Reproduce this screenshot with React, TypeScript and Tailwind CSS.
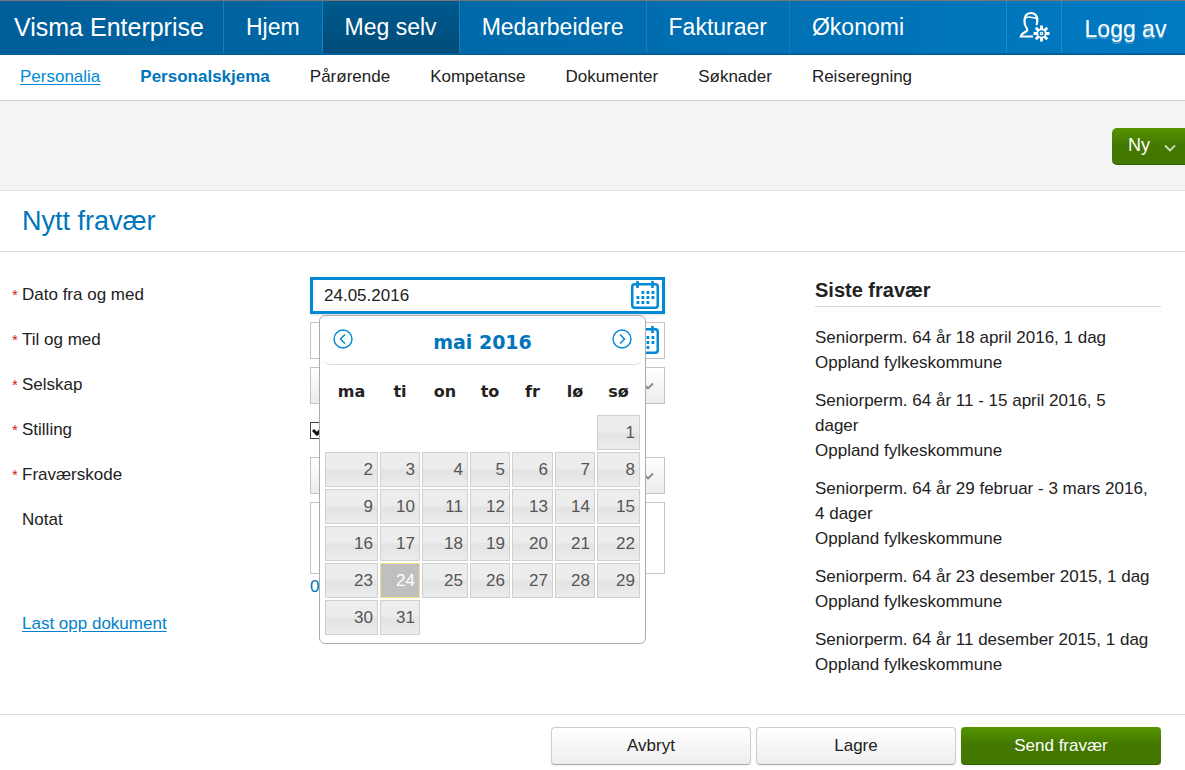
import type { ReactNode } from "react";

const navItem =
  "flex items-center border-r border-[#1c7db9] px-[22px] text-[23px] leading-8 text-white pb-px";

const subLinks = ["Pårørende", "Kompetanse", "Dokumenter", "Søknader", "Reiseregning"];

const weekdays = [
  { name: "ma", width: "w-[55px]" },
  { name: "ti", width: "w-[42px]" },
  { name: "on", width: "w-[48px]" },
  { name: "to", width: "w-[42px]" },
  { name: "fr", width: "w-[43px]" },
  { name: "lø", width: "w-[42px]" },
  { name: "sø", width: "w-[45px]" },
];

const firstWeekday = 6;
const weeks = Array.from({ length: 6 }, (_, w) =>
  Array.from({ length: 7 }, (_, d) => {
    const day = w * 7 + d - firstWeekday + 1;
    return day >= 1 && day <= 31 ? day : null;
  }),
);

const absences = [
  "Seniorperm. 64 år 18 april 2016, 1 dag",
  "Seniorperm. 64 år 11 - 15 april 2016, 5 dager",
  "Seniorperm. 64 år 29 februar - 3 mars 2016, 4 dager",
  "Seniorperm. 64 år 23 desember 2015, 1 dag",
  "Seniorperm. 64 år 11 desember 2015, 1 dag",
];

function CalendarIcon() {
  return (
    <svg width="28" height="28" viewBox="0 0 28 28" fill="none" stroke="#0089d7" aria-hidden="true">
      <rect x="1.25" y="3.25" width="25.5" height="23.5" rx="2.5" strokeWidth="2.5" />
      <path d="M6.5 0v7M21.5 0v7" strokeWidth="2.6" />
      <path d="M10.5 11.500h13M5.5 16.500h18M5.5 21.500h13" strokeWidth="2.8" strokeDasharray="2.8 2.2" />
    </svg>
  );
}

function UserGearIcon() {
  return (
    <svg width="32" height="32" viewBox="0 0 32 32" fill="none" stroke="white" aria-hidden="true">
      <path
        d="M15 25.500H2.800c.8-2.600 2.900-3.900 5.200-5 1.500-.8 1.500-2 .7-3.300C7.300 15.300 6.500 13.300 6.500 10.800 6.500 5 8.500 2 12.700 2c4.800 0 7 3.200 6.500 8.500-.1 1.500-.4 2.600-.9 3.500"
        strokeWidth="2.200"
      />
      <path d="M7 7.500c1.500-1.300 3.500-1.700 5.500-1.300 2.500.5 4.500.3 6 1.500" strokeWidth="1.600" />
      <circle cx="23.500" cy="22.500" r="4.200" strokeWidth="1.800" />
      <circle cx="23.500" cy="22.500" r="1.200" strokeWidth="1.200" />
      <path
        d="M23.500 14.500v4M23.500 26.500v4M15.500 22.500h4M27.500 22.500h4M17.800 16.800l2.900 2.900M26.300 25.300l2.900 2.900M29.200 16.800l-2.900 2.900M20.700 25.300l-2.900 2.900"
        strokeWidth="2.900"
      />
    </svg>
  );
}

function Chevron({ className }: { className: string }) {
  return (
    <svg width="12" height="12" viewBox="0 0 12 12" fill="none" stroke="currentColor" className={className} aria-hidden="true">
      <path d="M1 3.500l5 5 5-5" strokeWidth="1.800" />
    </svg>
  );
}

function ArrowCircle({ flip }: { flip?: boolean }) {
  return (
    <svg width="20" height="20" viewBox="0 0 20 20" fill="none" stroke="#0089d7" aria-hidden="true" className={flip ? "rotate-180" : ""}>
      <circle cx="10" cy="10" r="9" strokeWidth="1.400" />
      <path d="M12 5.500L7.500 10l4.500 4.500" strokeWidth="1.500" />
    </svg>
  );
}

function Row({ id, label, required, children }: { id: string; label: string; required?: boolean; children: ReactNode }) {
  return (
    <div className="flex items-start">
      <label htmlFor={id} className="flex w-[310px] shrink-0 pl-3 text-[17px] leading-9 text-[#222]">
        <span className="w-[10px] text-[15px] text-[#d02020]">{required ? "*" : ""}</span>
        {label}
      </label>
      <div className="relative min-w-0 max-w-[355px] flex-1">{children}</div>
    </div>
  );
}

function SelectBox({ id }: { id: string }) {
  return (
    <>
      <select
        id={id}
        className="block h-[37px] w-full appearance-none border border-[#c4c4c4] bg-linear-to-b from-white to-[#ececec] px-3 text-[17px]"
      >
        <option></option>
      </select>
      <Chevron className="pointer-events-none absolute top-[13px] right-[11px] text-[#888]" />
    </>
  );
}

function DatePicker() {
  return (
    <div className="absolute top-[38px] left-[9px] z-10 w-[327px] rounded-md border border-[#aaa] bg-white px-1 pb-[7px]">
      <div className="flex h-[49px] items-center justify-between rounded-md border-b border-[#ddd] px-[9px] pb-[3px]">
        <button type="button" aria-label="Forrige måned">
          <ArrowCircle />
        </button>
        <span className="pt-[6px] font-['DejaVu_Sans',sans-serif] text-[19px] leading-7 font-bold text-[#0075bc]">mai 2016</span>
        <button type="button" aria-label="Neste måned">
          <ArrowCircle flip />
        </button>
      </div>
      <table className="table-fixed border-collapse">
        <thead>
          <tr className="h-[49px]">
            {weekdays.map((d) => (
              <th key={d.name} className={`${d.width} p-0 pt-1 text-center font-['DejaVu_Sans',sans-serif] text-[16px] leading-6 font-bold text-[#222]`}>
                {d.name}
              </th>
            ))}
          </tr>
        </thead>
        <tbody>
          {weeks.map((week, w) => (
            <tr key={w} className="h-[37px]">
              {week.map((day, d) => (
                <td key={d} className="p-px">
                  {day !== null && (
                    <button
                      type="button"
                      className={
                        day === 24
                          ? "block h-[35px] w-full border border-[#f0e08c] bg-[#bfbfbf] pr-1 text-right text-[17px] leading-8 text-white"
                          : "block h-[35px] w-full border border-[#d0d0d0] bg-linear-to-b from-[#ededed] from-45% via-[#e3e3e3] via-55% to-[#ededed] pr-1 text-right text-[17px] leading-8 text-[#555]"
                      }
                    >
                      {day}
                    </button>
                  )}
                </td>
              ))}
            </tr>
          ))}
        </tbody>
      </table>
    </div>
  );
}

const plainButton =
  "h-[38px] w-[200px] rounded border border-[#ccc] border-b-[#aaa] bg-linear-to-b from-white to-[#eee] text-[17px] leading-6 text-[#222] shadow-xs";

export default function App() {
  return (
    <div className="min-h-screen bg-white font-['Liberation_Sans',Arial,sans-serif] text-[#222]">
      <header className="flex h-[55px] border-t border-b-2 border-t-[#777] border-b-[#00609b] bg-linear-to-r from-[#005e98] to-[#007ac2]">
        <a href="#" className="flex items-center border-r border-[#1c7db9] pr-[19px] pl-[14px] text-[25px] leading-8 text-white">
          Visma Enterprise
        </a>
        <nav className="flex">
          <a href="#" className={navItem}>Hjem</a>
          <a href="#" className={`${navItem} bg-linear-to-b from-[#005b8f] to-[#004b79]`}>Meg selv</a>
          <a href="#" className={navItem}>Medarbeidere</a>
          <a href="#" className={navItem}>Fakturaer</a>
          <a href="#" className="flex items-center px-[22px] pb-px text-[23px] leading-8 text-white">Økonomi</a>
        </nav>
        <a href="#" aria-label="Brukerinnstillinger" className="ml-auto flex w-14 items-center justify-center border-x border-[#2189c8]">
          <UserGearIcon />
        </a>
        <a href="#" className="flex w-[123px] items-center justify-center pt-[3px] pl-1 text-[23px] leading-8 text-white text-shadow-[0_2px_0_rgb(255_255_255/0.3)]">
          Logg av
        </a>
      </header>

      <nav className="flex h-[46px] items-center gap-10 border-b border-[#d6d6d6] px-5 pb-px text-[17px] leading-6">
        <a href="#" className="text-[#0089d7] underline underline-offset-2">Personalia</a>
        <a href="#" className="font-bold text-[#0075bc]">Personalskjema</a>
        {subLinks.map((l) => (
          <a key={l} href="#">{l}</a>
        ))}
      </nav>

      <div className="flex h-[90px] items-start justify-end border-b border-[#e2e2e2] bg-[#f4f4f4] pt-[27px]">
        <button type="button" className="flex h-[37px] w-[73px] items-center justify-between rounded-l-[5px] border-b border-[#2f6000] bg-linear-to-b from-[#569400] to-[#437700] to-50% pr-[9px] pb-[2px] pl-4 text-[18px] leading-6 text-white">
          Ny
          <Chevron className="mt-[6px] text-[#cfe0ba]" />
        </button>
      </div>

      <h1 className="border-b border-[#dcdcdc] pt-[10px] pb-[10px] pl-[22px] text-[27px] leading-10 text-[#0075bc]">Nytt fravær</h1>

      <main className="flex items-start justify-between border-b border-[#dcdcdc] pt-[25px] pr-6 pb-[37px]">
        <form className="flex min-w-0 flex-1 flex-col gap-2">
          <Row id="from" label="Dato fra og med" required>
            <input
              id="from"
              type="text"
              defaultValue="24.05.2016"
              className="block h-[37px] w-full border-3 border-[#0089d7] bg-white pr-10 pl-[11px] text-[17px] leading-6 shadow-sm outline-none"
            />
            <button type="button" aria-label="Velg dato fra og med" className="absolute top-1 right-[6px]">
              <CalendarIcon />
            </button>
            <DatePicker />
          </Row>
          <Row id="to" label="Til og med" required>
            <input id="to" type="text" className="block h-[37px] w-full border border-[#c4c4c4] bg-white pr-10 pl-3 text-[17px] leading-6" />
            <button type="button" aria-label="Velg dato til og med" className="absolute top-1 right-[6px]">
              <CalendarIcon />
            </button>
          </Row>
          <Row id="company" label="Selskap" required>
            <SelectBox id="company" />
          </Row>
          <Row id="position" label="Stilling" required>
            <div className="flex h-[37px] items-center">
              <input id="position" type="checkbox" defaultChecked className="h-[17px] w-[17px] appearance-none border border-[#444] bg-white" />
              <svg width="13" height="13" viewBox="0 0 13 13" fill="none" stroke="#111" className="pointer-events-none absolute left-[2px]" aria-hidden="true">
                <path d="M1 6l4 4 7-8" strokeWidth="3" />
              </svg>
            </div>
          </Row>
          <Row id="code" label="Fraværskode" required>
            <SelectBox id="code" />
          </Row>
          <Row id="note" label="Notat">
            <textarea id="note" className="block h-[72px] w-full resize-none border border-[#c4c4c4] bg-white p-2 text-[17px]" />
            <span className="block text-[17px] leading-[26px] text-[#0075bc]">0</span>
          </Row>
          <a href="#" className="self-start pl-[22px] text-[17px] leading-8 text-[#0082cb] underline underline-offset-2">
            Last opp dokument
          </a>
        </form>

        <aside className="w-[346px] shrink-0">
          <h2 className="border-b border-[#d6d6d6] pb-[3px] text-[20px] leading-[26px] font-bold">Siste fravær</h2>
          <ul className="flex flex-col gap-[13px] pt-[18px] pr-2 text-[17px] leading-[25px]">
            {absences.map((a) => (
              <li key={a}>
                {a}
                <br />
                Oppland fylkeskommune
              </li>
            ))}
          </ul>
        </aside>
      </main>

      <footer className="flex justify-end gap-[5px] pt-3 pr-6">
        <button type="button" className={plainButton}>Avbryt</button>
        <button type="button" className={plainButton}>Lagre</button>
        <button type="button" className="h-[38px] w-[200px] rounded border-b border-[#2f6000] bg-linear-to-b from-[#569400] to-[#437700] to-50% text-[17px] leading-6 text-white shadow-xs">
          Send fravær
        </button>
      </footer>
    </div>
  );
}
